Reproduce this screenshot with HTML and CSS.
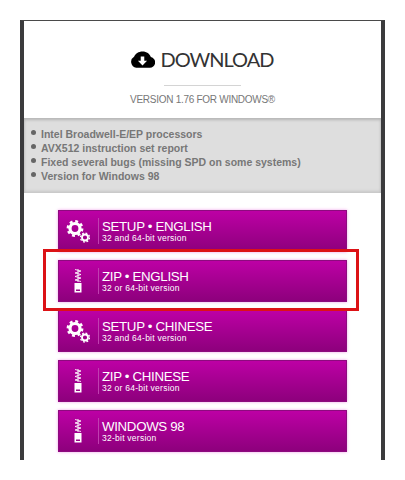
FILE: index.html
```html
<!DOCTYPE html>
<html lang="en">
<head>
  <meta charset="UTF-8">
  <meta name="viewport" content="width=device-width, initial-scale=1.0">
  <title>Download</title>
  <link rel="stylesheet" href="styles.css">
</head>
<body>

<svg class="defs" aria-hidden="true">
  <symbol id="gears" viewBox="0 0 24 24">
    <circle cx="9" cy="9.500" r="5" fill="none" stroke="#fff" stroke-width="3.2"/>
    <circle cx="9" cy="9.500" r="7.2" fill="none" stroke="#fff" stroke-width="2.4" stroke-dasharray="2.9 2.755"/>
    <circle cx="19" cy="18.500" r="3" fill="none" stroke="#fff" stroke-width="1.8"/>
    <circle cx="19" cy="18.500" r="4.5" fill="none" stroke="#fff" stroke-width="1.3" stroke-dasharray="1.8 1.734"/>
  </symbol>
  <symbol id="zip" viewBox="0 0 8 24">
    <path d="M1 .5 7 2 1 4 7 5.500 1 7.500 7 9 1 11 7 12.500M4 0v13" fill="none" stroke="#fff" stroke-opacity=".85" stroke-width="1"/>
    <path d="M.5 14h7v9.500h-7zM2 20.500v1.500h4v-1.500z" fill="#fff" fill-rule="evenodd"/>
  </symbol>
</svg>

<div class="page">
  <div class="header">
    <div class="title">
      <svg class="cloud" viewBox="0 0 24 16">
        <path d="M6 15.800A5.600 5.600 0 0 1 3.900 5.400C5 2.200 8.300.2 12 .2c4 0 7.200 2.200 8 5.500a5.100 5.100 0 0 1-1.300 10.100z" fill="#000"/>
        <path d="M10.300 5h3.400v4.300h2.700L12 13.700 7.600 9.300h2.700z" fill="#fff"/>
      </svg>
      <span>DOWNLOAD</span>
    </div>
    <div class="line"></div>
    <div class="version">VERSION 1.76 FOR WINDOWS®</div>
  </div>

  <ul class="news">
    <li>Intel Broadwell-E/EP processors</li>
    <li>AVX512 instruction set report</li>
    <li>Fixed several bugs (missing SPD on some systems)</li>
    <li>Version for Windows 98</li>
  </ul>

  <div class="buttons">
    <a class="button">
      <span class="icon"><svg class="gears"><use href="#gears"/></svg></span>
      <span class="text"><span class="name">SETUP • ENGLISH</span><span class="bits">32 and 64-bit version</span></span>
    </a>
    <a class="button marked">
      <span class="icon"><svg class="zip"><use href="#zip"/></svg></span>
      <span class="text"><span class="name">ZIP • ENGLISH</span><span class="bits">32 or 64-bit version</span></span>
    </a>
    <a class="button">
      <span class="icon"><svg class="gears"><use href="#gears"/></svg></span>
      <span class="text"><span class="name">SETUP • CHINESE</span><span class="bits">32 and 64-bit version</span></span>
    </a>
    <a class="button">
      <span class="icon"><svg class="zip"><use href="#zip"/></svg></span>
      <span class="text"><span class="name">ZIP • CHINESE</span><span class="bits">32 or 64-bit version</span></span>
    </a>
    <a class="button">
      <span class="icon"><svg class="zip"><use href="#zip"/></svg></span>
      <span class="text"><span class="name">WINDOWS 98</span><span class="bits">32-bit version</span></span>
    </a>
  </div>
</div>

</body>
</html>
```

FILE: styles.css
```css
* {
  box-sizing: border-box;
}
body {
  margin: 0;
  padding: 20px;
  background: #fff;
  font-family: "Liberation Sans", Arial, sans-serif;
}
.defs {
  display: none;
}
.page {
  width: 365px;
  height: 440px;
  border: 4px solid #3b3b3d;
  border-top: 1px solid #4a4a4a;
  border-bottom: 0;
}
.header {
  height: 97px;
  padding-top: 25px;
  display: flex;
  flex-direction: column;
  align-items: center;
}
.title {
  height: 26px;
  display: flex;
  align-items: center;
  gap: 6px;
  font-family: Lato, sans-serif;
  font-size: 20px;
  letter-spacing: -1px;
  line-height: 26px;
  color: #333;
}
.cloud {
  width: 25px;
  height: 17px;
  margin-left: -2px;
}
.line {
  width: 77px;
  height: 1px;
  margin-top: 13px;
  background: #d4d4d4;
}
.version {
  margin-top: 7px;
  font-size: 10px;
  letter-spacing: -0.28px;
  line-height: 14px;
  color: #777;
}
.news {
  height: 75px;
  margin: 0;
  padding: 9px 0 0 17px;
  list-style: none;
  background: #dedede;
  box-shadow: inset 0 2px 3px #b5b5b5, inset 0 -2px 3px #c8c8c8;
  font-size: 10.5px;
  font-weight: bold;
  line-height: 14px;
  color: #777;
}
.news li {
  position: relative;
}
.news li::before {
  content: "";
  position: absolute;
  left: -10px;
  top: 3px;
  width: 5px;
  height: 5px;
  border-radius: 50%;
  background: #666;
}
.buttons {
  display: flex;
  flex-direction: column;
  gap: 8px;
  padding: 17px 34px 0;
}
.button {
  position: relative;
  display: flex;
  align-items: center;
  height: 42px;
  background: linear-gradient(#bd00a5, #8d007c);
  border: 1px solid #8d0a7e;
  box-shadow: 0 0 3px #f0a0ea;
  color: #fff;
}
/* red frame around the build to pick */
.marked::after {
  content: "";
  position: absolute;
  z-index: 1;
  top: -12px;
  left: -16px;
  right: -13px;
  bottom: -10px;
  border: 3px solid #dc1216;
}
.icon {
  width: 40px;
  height: 26px;
  padding-right: 2px;
  display: flex;
  align-items: center;
  justify-content: center;
  border-right: 1px solid #c03fb0;
}
.gears {
  width: 24px;
  height: 24px;
}
.zip {
  width: 8px;
  height: 24px;
}
.text {
  display: flex;
  flex-direction: column;
  padding-left: 3px;
}
.name {
  font-size: 13.3px;
  letter-spacing: -0.33px;
  line-height: 14px;
}
.bits {
  font-size: 8.5px;
  letter-spacing: 0.25px;
  line-height: 9px;
}
```
